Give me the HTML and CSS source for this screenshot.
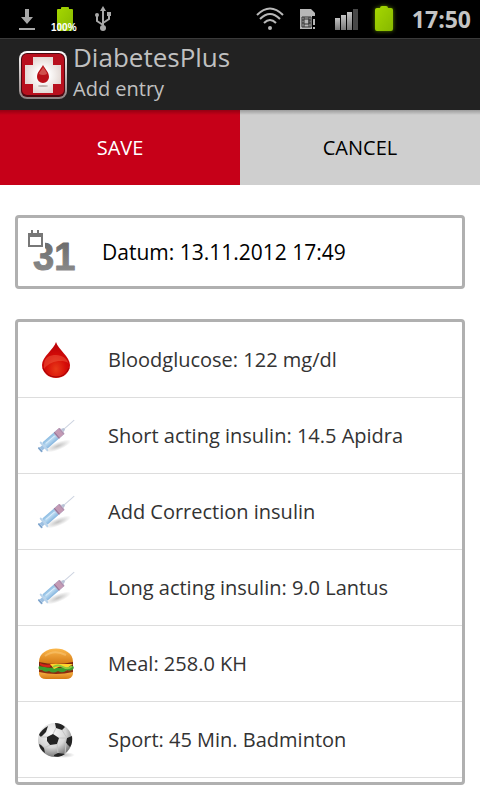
FILE: index.html
```html
<!DOCTYPE html>
<html lang="en">
<head>
    <meta charset="UTF-8">
    <meta name="viewport" content="width=device-width, initial-scale=1.0">
    <title>DiabetesPlus - Add entry</title>
    <link rel="stylesheet" href="styles.css">
</head>
<body>

    <!-- gradients and symbols shared by the icons -->
    <svg class="defs" width="0" height="0" aria-hidden="true">
        <defs>
            <linearGradient id="battery" x1="0" y1="0" x2="1" y2="1">
                <stop offset="0" stop-color="#a6d800"/>
                <stop offset="1" stop-color="#86b800"/>
            </linearGradient>
            <linearGradient id="gray" x1="0" y1="0" x2="0" y2="1">
                <stop offset="0" stop-color="#666"/>
                <stop offset="1" stop-color="#909090"/>
            </linearGradient>
            <linearGradient id="signal" x1="0" y1="0" x2="0" y2="1">
                <stop offset="0" stop-color="#c4c4c4"/>
                <stop offset="1" stop-color="#777"/>
            </linearGradient>
            <linearGradient id="frame" x1="0" y1="0" x2="0" y2="1">
                <stop offset="0" stop-color="#fff"/>
                <stop offset="1" stop-color="#8c8080"/>
            </linearGradient>
            <linearGradient id="barrel" x1="0" y1="0" x2="0" y2="1">
                <stop offset="0" stop-color="#8cbce2"/>
                <stop offset="0.5" stop-color="#b8d8f0"/>
                <stop offset="1" stop-color="#84b4de"/>
            </linearGradient>
            <linearGradient id="bun" x1="0" y1="0" x2="0" y2="1">
                <stop offset="0" stop-color="#fbb84c"/>
                <stop offset="1" stop-color="#d57a14"/>
            </linearGradient>
            <radialGradient id="cross">
                <stop offset="0.3" stop-color="#fff"/>
                <stop offset="1" stop-color="#e4dad6"/>
            </radialGradient>
            <radialGradient id="blood" cx="0.5" cy="0.75" r="0.6">
                <stop offset="0" stop-color="#e83a18"/>
                <stop offset="0.6" stop-color="#d60c08"/>
                <stop offset="1" stop-color="#c00408"/>
            </radialGradient>
            <radialGradient id="ball" cx="0.4" cy="0.3" r="0.7">
                <stop offset="0" stop-color="#fafafa"/>
                <stop offset="0.6" stop-color="#d6d6d6"/>
                <stop offset="1" stop-color="#777"/>
            </radialGradient>
            <radialGradient id="shade">
                <stop offset="0" stop-color="#999" stop-opacity="0.6"/>
                <stop offset="1" stop-color="#999" stop-opacity="0"/>
            </radialGradient>
        </defs>
        <symbol id="syringe" viewBox="0 0 40 40">
            <ellipse cx="22" cy="30" rx="14" ry="4" fill="url(#shade)" transform="rotate(-22 22 30)"/>
            <g transform="translate(5 33) rotate(-41)">
                <path d="M30 0H44" stroke="#cdd3e0"/>
                <rect x="-2" y="-3" width="2" height="6" rx="1" fill="#7ea4cc"/>
                <rect x="0" y="-2" width="5" height="4" fill="#9cc0e2"/>
                <rect x="3" y="-6" width="2" height="12" rx="1" fill="#b8d2ea"/>
                <rect x="5" y="-4" width="21" height="8" rx="1" fill="url(#barrel)"/>
                <rect x="20" y="-4" width="8" height="8" rx="1" fill="#c49ab4"/>
                <path d="M21 -4V4" stroke="#8d7498"/>
                <path d="M27 -4V4" stroke="#a890b0"/>
                <path d="M7 -1H19" stroke="#dceefc"/>
                <path d="M28 -2L31 -1V1L28 2Z" fill="#b8c2d6"/>
            </g>
        </symbol>
    </svg>

    <div class="status-bar">
        <svg class="download" width="16" height="24" viewBox="0 0 16 24">
            <path d="M6 2H10V10H14L8 17L2 10H6Z" fill="#a8a8a8"/>
            <rect x="0" y="21" width="16" height="2" fill="#a8a8a8"/>
        </svg>
        <div class="battery-level">
            <svg width="18" height="26" viewBox="0 0 18 26">
                <path d="M1 4Q1 3 2 3H5V2Q5 1 6 1H12Q13 1 13 2V3H16Q17 3 17 4V23Q17 25 15 25H3Q1 25 1 23Z" fill="url(#battery)"/>
            </svg>
            <span>100%</span>
        </div>
        <svg class="usb" width="18" height="26" viewBox="0 0 18 26" fill="#a8a8a8">
            <path d="M9 3V23M9 19L3 15V10M9 17L15 13V9" fill="none" stroke="#a8a8a8" stroke-width="2"/>
            <path d="M9 0L12 5H6Z"/>
            <circle cx="3" cy="9" r="2"/>
            <rect x="13" y="6" width="4" height="4"/>
            <circle cx="9" cy="22" r="3"/>
        </svg>
        <svg class="wifi" width="28" height="24" viewBox="0 0 28 24">
            <g fill="none" stroke="#b8b8b8" stroke-width="2">
                <path d="M1 8Q14 -5 27 8"/>
                <path d="M4 12Q14 2 24 12"/>
                <path d="M8 16Q14 10 20 16"/>
            </g>
            <circle cx="14" cy="21" r="2" fill="#b8b8b8"/>
        </svg>
        <svg class="sim" width="16" height="22" viewBox="0 0 16 22">
            <path d="M0 1H11L15 5V8H12V21H0Z" fill="#b8b8b8"/>
            <path d="M2 9H11V19H2ZM4 9V19M9 9V19M2 12H4M2 15H4M9 12H11M9 15H11M4 11H9V16H4" fill="none" stroke="#333"/>
            <path d="M14 11V17M14 19V21" stroke="#b8b8b8" stroke-width="2"/>
        </svg>
        <svg class="signal" width="24" height="24" viewBox="0 0 24 24">
            <g fill="url(#signal)">
                <rect x="0" y="11" width="5" height="12"/>
                <rect x="6" y="8" width="5" height="15"/>
                <rect x="12" y="5" width="5" height="18"/>
            </g>
            <rect x="18" y="2" width="5" height="21" fill="#484848"/>
        </svg>
        <svg class="battery" width="20" height="26" viewBox="0 0 20 26">
            <path d="M1 4Q1 2 3 2H6Q6 0 8 0H12Q14 0 14 2H17Q19 2 19 4V23Q19 25 17 25H3Q1 25 1 23Z" fill="url(#battery)"/>
        </svg>
        <span class="clock">17:50</span>
    </div>

    <header class="app-header">
        <svg width="48" height="48" viewBox="0 0 48 48">
            <rect width="48" height="48" rx="8" fill="url(#frame)"/>
            <rect x="2" y="2" width="44" height="44" rx="6" fill="#4e0810"/>
            <rect x="3" y="3" width="42" height="41" rx="5" fill="#b8101e"/>
            <path d="M14 6H34V14H42V33H34V42H14V33H6V14H14Z" fill="url(#cross)"/>
            <path d="M24 14C26 18 30 21 30 26A6 6 0 0 1 18 26C18 21 22 18 24 14Z" fill="#b81018"/>
            <path d="M24 16C26 19 28 21 28 23Q24 25 20 23C20 21 23 19 24 16Z" fill="#d0504c"/>
            <ellipse cx="24" cy="35" rx="5" ry="1" fill="#c0b4b0"/>
        </svg>
        <div class="titles">
            <h1>DiabetesPlus</h1>
            <h2>Add entry</h2>
        </div>
    </header>

    <form class="entry-form">
        <div class="actions">
            <button type="submit" class="save">SAVE</button>
            <button type="button" class="cancel">CANCEL</button>
        </div>

        <button type="button" class="date-box">
            <svg width="52" height="56" viewBox="0 0 52 56">
                <text class="day" x="7" y="46">31</text>
                <path d="M0 6H19V25L16 29H0Z" fill="#fff"/>
                <path d="M3 10H16V22H3Z" fill="#fff" stroke="#777" stroke-width="2"/>
                <path d="M2 9H17V13H2Z" fill="#777"/>
                <path d="M6 6V10M12 6V10" stroke="#777" stroke-width="2"/>
            </svg>
            <span>Datum: 13.11.2012 17:49</span>
        </button>

        <ul class="entry-list">
            <li>
                <button type="button">
                    <svg width="40" height="40" viewBox="0 0 40 40">
                        <path d="M20 2C22 9 34 17 34 25A14 13 0 0 1 6 25C6 17 18 9 20 2Z" fill="url(#blood)"/>
                        <path d="M8 25C8 17 14 15 20 15S32 19 32 23C26 19 14 21 8 29Z" fill="#f47050" opacity="0.4"/>
                        <path d="M7 28Q11 37 20 37T33 28" fill="none" stroke="#a00408"/>
                    </svg>
                    <span>Bloodglucose: 122 mg/dl</span>
                </button>
            </li>
            <li>
                <button type="button">
                    <svg width="40" height="40"><use href="#syringe"/></svg>
                    <span>Short acting insulin: 14.5 Apidra</span>
                </button>
            </li>
            <li>
                <button type="button">
                    <svg width="40" height="40"><use href="#syringe"/></svg>
                    <span>Add Correction insulin</span>
                </button>
            </li>
            <li>
                <button type="button">
                    <svg width="40" height="40"><use href="#syringe"/></svg>
                    <span>Long acting insulin: 9.0 Lantus</span>
                </button>
            </li>
            <li>
                <button type="button">
                    <svg width="40" height="40" viewBox="0 0 40 40">
                        <path d="M3 27H37V30Q36 35 30 35H10Q4 35 3 30Z" fill="url(#bun)"/>
                        <path d="M3 25Q20 29 37 25V28Q20 32 3 28Z" fill="#8a2c10"/>
                        <path d="M3 22H37Q39 24 36 26Q33 27 31 26Q27 30 22 27Q17 30 13 27Q9 29 6 26Q1 26 3 22Z" fill="#3c9e2c"/>
                        <path d="M3 18H37V22Q20 26 3 22Z" fill="#7c2410"/>
                        <path d="M4 19Q9 22 16 20L14 23Q8 24 4 21Z" fill="#d42418"/>
                        <path d="M14 20H37L34 22L30 25L25 22L18 25Z" fill="#ffd42c"/>
                        <path d="M17 23Q22 20 27 23T36 22" fill="none" stroke="#8cc83c" stroke-width="2"/>
                        <path d="M3 18C3 0 37 0 37 18Q20 22 3 18Z" fill="url(#bun)"/>
                        <path d="M9 12Q18 5 30 11" fill="none" stroke="#ffd48c" stroke-width="2" opacity="0.4"/>
                    </svg>
                    <span>Meal: 258.0 KH</span>
                </button>
            </li>
            <li>
                <button type="button">
                    <svg width="40" height="40" viewBox="0 0 40 40">
                        <ellipse cx="28" cy="35" rx="11" ry="3" fill="url(#shade)"/>
                        <circle cx="19" cy="20" r="17" fill="url(#ball)"/>
                        <path d="M11 17L17 14L23 18L21 24L14 25L11 21ZM19 3Q25 3 29 7L26 10L20 8ZM36 16Q37 23 34 27L30 23L31 18ZM12 6Q5 10 3 15L5 17L10 12ZM3 24Q4 30 9 33L8 28L5 25ZM18 35L22 33L29 34Q24 38 18 36Z" fill="#242424"/>
                        <path d="M17 14L20 8M23 18L31 18M21 24L22 33M14 25L8 28M11 17L5 17M26 10L31 18M30 23L29 34" fill="none" stroke="#c4c4c4"/>
                    </svg>
                    <span>Sport: 45 Min. Badminton</span>
                </button>
            </li>
        </ul>
    </form>

</body>
</html>
```
FILE: styles.css
```css
* {
    margin: 0;
    padding: 0;
    box-sizing: border-box;
}

body {
    font-family: "Open Sans", "Noto Sans", sans-serif;
    font-size: 20px;
    background-color: #fff;
    color: #333;
}

button {
    font: inherit;
    color: inherit;
    border: none;
    background: none;
    cursor: pointer;
}

svg {
    flex-shrink: 0;
}

.defs {
    position: absolute;
}

.status-bar {
    display: flex;
    align-items: center;
    height: 38px;
    padding: 0 9px 0 19px;
    background-color: #000;
}

.battery-level {
    position: relative;
    height: 26px;
    margin-left: 21px;
}

.battery-level svg {
    display: block;
}

.battery-level span {
    position: absolute;
    left: -5px;
    bottom: -2px;
    font: bold 10px/12px "Liberation Sans", sans-serif;
    color: #fff;
}

.usb {
    margin-left: 20px;
}

.wifi {
    margin-left: auto;
}

.sim {
    margin-left: 16px;
}

.signal {
    margin-left: 19px;
}

.battery {
    margin-left: 15px;
    filter: drop-shadow(0 0 2px #5a8000);
}

.clock {
    margin-left: 18px;
    font-size: 23px;
    line-height: 32px;
    font-weight: bold;
    color: #c4c4c4;
}

.app-header {
    display: flex;
    align-items: center;
    height: 72px;
    padding-left: 19px;
    gap: 6px;
    background-color: #222;
    border-top: 1px solid #3a3a3a;
}

.titles {
    color: #c0c0c0;
    padding-bottom: 8px;
}

.titles h1 {
    font-size: 26px;
    line-height: 36px;
    font-weight: normal;
}

.titles h2 {
    font-size: 20px;
    line-height: 27px;
    font-weight: normal;
}

.actions {
    display: flex;
    height: 75px;
}

.actions button {
    flex: 1;
    background-image: linear-gradient(rgba(0, 0, 0, 0.25), rgba(0, 0, 0, 0) 5px);
}

.save {
    background-color: #c60018;
    color: #fff;
}

.cancel {
    background-color: #cfcfcf;
    color: #000;
}

.date-box, .entry-list {
    border: 3px solid #b0b0b0;
    border-radius: 4px;
}

.date-box {
    display: flex;
    align-items: center;
    width: calc(100% - 30px);
    height: 74px;
    margin: 30px 15px;
    padding-left: 8px;
    gap: 24px;
    font-size: 21px;
    color: #000;
}

.day {
    font-family: "Liberation Sans", sans-serif;
    font-size: 38px;
    font-weight: bold;
    fill: url(#gray);
    stroke: url(#gray);
    stroke-width: 1px;
    stroke-linejoin: round;
}

.entry-list {
    list-style: none;
    margin: 0 15px 15px;
    padding-bottom: 4px;
}

.entry-list li {
    border-bottom: 1px solid #ddd;
}

.entry-list button {
    display: flex;
    align-items: center;
    width: 100%;
    height: 75px;
    padding-left: 18px;
    gap: 32px;
}
```
